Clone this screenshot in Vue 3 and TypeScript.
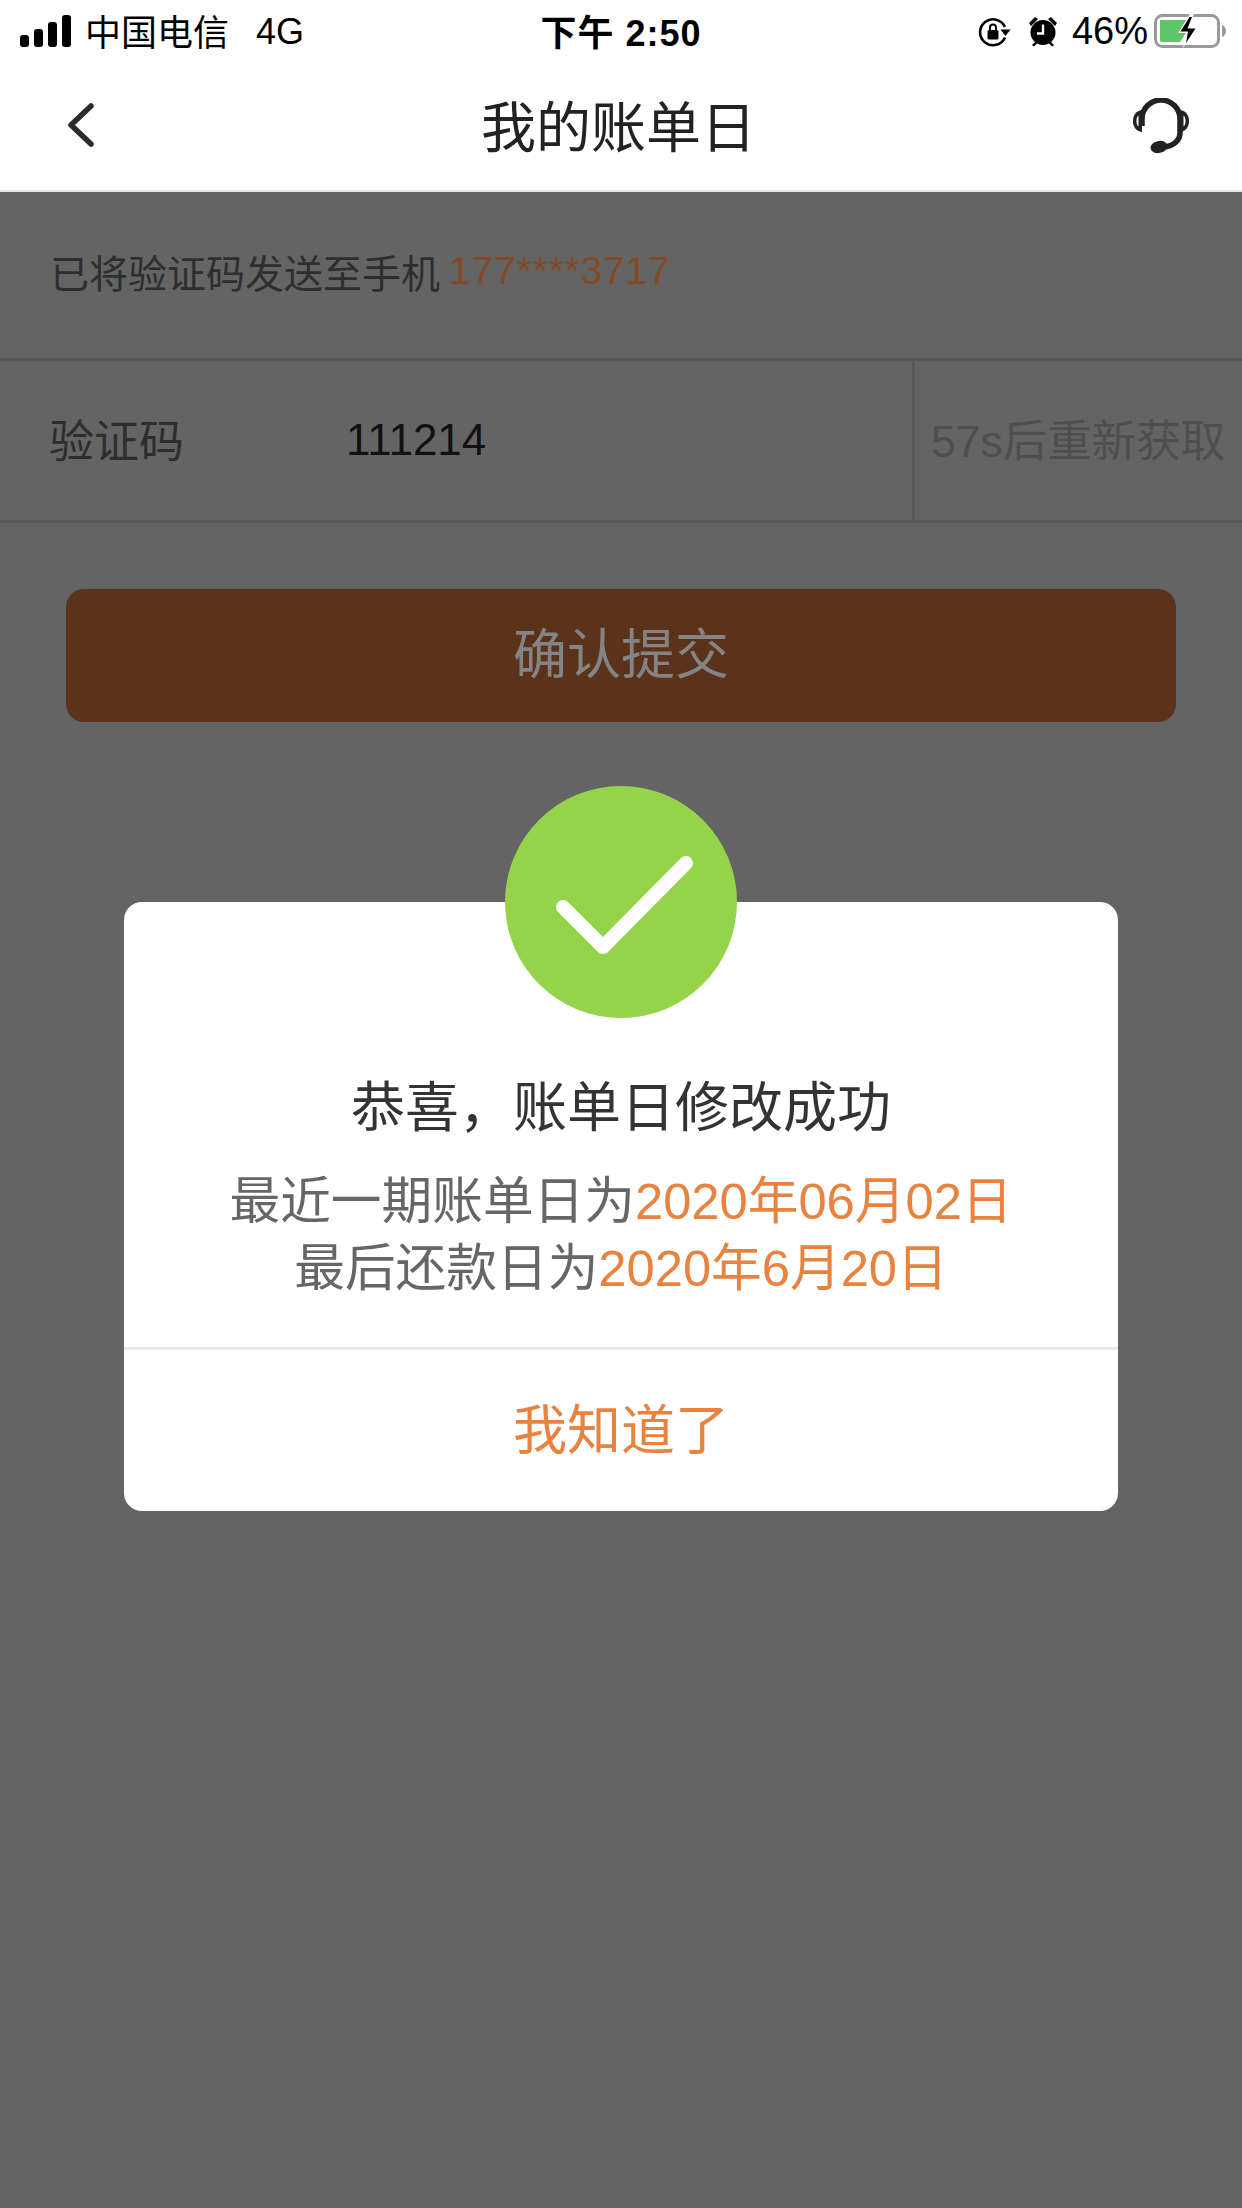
<template>
  <div class="page">
    <header class="top">
      <div class="status-bar">
        <div class="status-left">
          <svg class="signal" width="51" height="32" viewBox="0 0 51 32">
            <rect x="0" y="20" width="9" height="12" rx="3" />
            <rect x="14" y="14" width="9" height="18" rx="3" />
            <rect x="28" y="7" width="9" height="25" rx="3" />
            <rect x="42" y="0" width="9" height="32" rx="3" />
          </svg>
          <span class="carrier">中国电信</span>
          <span class="network">4G</span>
        </div>
        <span class="clock">下午 2:50</span>
        <div class="status-right">
          <svg class="lock" width="34" height="30" viewBox="0 0 34 30">
            <path d="M27 20.5A13 13 0 1 1 27 10" fill="none" stroke="#000" stroke-width="2.6" />
            <path d="M22.5 12.5h10l-5 6.5z" />
            <rect x="9.5" y="13" width="11" height="9.5" rx="1.5" />
            <path d="M12 13v-2.5a3 3 0 0 1 6 0V13" fill="none" stroke="#000" stroke-width="2" />
          </svg>
          <svg class="alarm" width="30" height="31" viewBox="0 0 30 31">
            <path d="M1 7l6-6 3 2-7 7zM29 7l-6-6-3 2 7 7z" />
            <circle cx="15" cy="16.500" r="12.500" />
            <path d="M4 29l4-4 2 1.500-4 4zM26 29l-4-4-2 1.500 4 4z" />
            <path d="M15 8.500v9h-6" fill="none" stroke="#fff" stroke-width="2.400" />
          </svg>
          <span class="percent">46%</span>
          <svg class="battery" width="72" height="34" viewBox="0 0 72 34">
            <rect x="1.500" y="1.500" width="63" height="31" rx="7" fill="#fff" stroke="#999" stroke-width="3" />
            <path d="M68 11c2.500 1 4 3 4 6s-1.500 5-4 6z" fill="#999" />
            <path d="M6 6h31L6 28z M6 6h29l-9 13h6l-6 9H9a3 3 0 0 1-3-3z" fill="#5fc667" />
            <path d="M36 0L24 19h8l-3 15 14-21h-9l6-13z" fill="#fff" />
            <path d="M35.500 3L26.500 17.500h7.500L32 29l9.500-14.500h-8L38 3z" fill="#000" />
          </svg>
        </div>
      </div>
      <nav class="nav-bar">
        <svg class="back" width="30" height="46" viewBox="0 0 30 46">
          <path d="M26 4L6 23l20 19" fill="none" stroke="#2b2b2b" stroke-width="5.500" stroke-linecap="round" stroke-linejoin="round" />
        </svg>
        <h1 class="nav-title">我的账单日</h1>
        <svg class="headset" width="56" height="56" viewBox="0 0 56 56">
          <path d="M9 28V21a19 19 0 0 1 38 0v14c0 7-6 13-16 14" fill="none" stroke="#222" stroke-width="5.500" />
          <path d="M9 12v22C3 33 0 29 0 23s3-10 9-11z" fill="#222" />
          <path d="M47 12v22c6-1 9-5 9-11s-3-10-9-11z" fill="#222" />
          <path d="M5.500 17.500v11c-1.500-1-2-3-2-5.500s.5-4.500 2-5.500zM50.500 17.500v11c1.500-1 2-3 2-5.500s-.5-4.500-2-5.500z" fill="#fff" />
          <ellipse cx="26" cy="49" rx="8.500" ry="6" transform="rotate(-12 26 49)" fill="#222" />
        </svg>
      </nav>
    </header>

    <main class="content">
      <div class="hint">已将验证码发送至手机 <span class="phone">177****3717</span></div>
      <div class="field">
        <span class="field-label">验证码</span>
        <span class="field-value">111214</span>
        <span class="resend">57s后重新获取</span>
      </div>
      <div class="submit">确认提交</div>

      <div class="overlay">
        <div class="dialog">
          <div class="badge">
            <svg width="140" height="104" viewBox="0 0 140 104">
              <path d="M8 53l40 40L131 9" fill="none" stroke="#fff" stroke-width="14" stroke-linecap="round" stroke-linejoin="round" />
            </svg>
          </div>
          <div class="dialog-body">
            <h2 class="dialog-title">恭喜，账单日修改成功</h2>
            <p class="dialog-line">最近一期账单日为<em>{{ billDate }}</em></p>
            <p class="dialog-line">最后还款日为<em>{{ dueDate }}</em></p>
          </div>
          <div class="dialog-action">我知道了</div>
        </div>
      </div>
    </main>
  </div>
</template>

<script setup lang="ts">
const billDate: string = "2020年06月02日";
const dueDate: string = "2020年6月20日";
</script>

<style>
html,
body {
  margin: 0;
  background: #646464;
}
</style>

<style scoped>
.page {
  width: 1242px;
  height: 2208px;
  display: flex;
  flex-direction: column;
  background: #646464;
  font-family: "Liberation Sans", "Noto Sans CJK SC", sans-serif;
  overflow: hidden;
}

.top {
  height: 190px;
  background: #fff;
  border-bottom: 2px solid #e6e6e6;
}

.status-bar {
  height: 62px;
  display: grid;
  grid-template-columns: 1fr auto 1fr;
  align-items: center;
  padding: 0 16px 0 20px;
  color: #000;
}

.status-left,
.status-right {
  display: flex;
  align-items: center;
}

.status-right {
  justify-content: flex-end;
}

.signal {
  margin-right: 14px;
}

.carrier {
  font-size: 36px;
  margin-bottom: 2px;
}

.network {
  font-size: 36px;
  margin-left: 27px;
  margin-top: 2px;
}

.clock {
  font-size: 36px;
  font-weight: 700;
  letter-spacing: 1px;
  margin: 0 4px 3px 0;
}

.lock {
  margin-right: 16px;
  margin-top: 1px;
}

.alarm {
  margin-right: 14px;
}

.percent {
  font-size: 38px;
  margin-right: 6px;
  margin-top: 1px;
}

.nav-bar {
  height: 128px;
  display: grid;
  grid-template-columns: 1fr auto 1fr;
  align-items: center;
  padding: 0 53px 0 48px;
}

.back {
  justify-self: start;
  margin-left: 17px;
  margin-bottom: 3px;
}

.headset {
  justify-self: end;
}

.nav-title {
  margin: 0 0 6px;
  font-size: 55px;
  font-weight: 400;
  color: #222;
}

.content {
  position: relative;
  flex: 1;
}

.hint {
  height: 169px;
  display: flex;
  align-items: center;
  gap: 9px;
  padding: 0 0 9px 50px;
  font-size: 39px;
  color: #2e2e2e;
  border-bottom: 3px solid #585858;
  box-sizing: border-box;
}

.phone {
  letter-spacing: 0.8px;
  color: #844a26;
}

.field {
  height: 162px;
  display: flex;
  align-items: center;
  padding-left: 49px;
  border-bottom: 3px solid #585858;
  box-sizing: border-box;
}

.field-label {
  width: 297px;
  font-size: 45px;
  color: #2e2e2e;
  margin-bottom: 5px;
}

.field-value {
  flex: 1;
  font-size: 44px;
  color: #111;
  margin-bottom: 2px;
}

.resend {
  width: 330px;
  height: 100%;
  display: flex;
  align-items: center;
  padding: 0 0 6px 16px;
  box-sizing: border-box;
  border-left: 3px solid #585858;
  font-size: 44.500px;
  color: #4e4e4e;
  white-space: nowrap;
}

.submit {
  height: 133px;
  margin: 66px 66px 0;
  padding-bottom: 10px;
  box-sizing: border-box;
  display: flex;
  align-items: center;
  justify-content: center;
  border-radius: 18px;
  background: #5b331b;
  font-size: 54px;
  color: #848484;
}

.overlay {
  position: absolute;
  inset: 0;
  padding: 710px 124px 0;
}

.dialog {
  position: relative;
  height: 609px;
  display: flex;
  flex-direction: column;
  border-radius: 18px;
  background: #fff;
}

.badge {
  position: absolute;
  top: -116px;
  left: 381px;
  width: 232px;
  height: 232px;
  padding: 8px 0 0 8px;
  box-sizing: border-box;
  display: flex;
  align-items: center;
  justify-content: center;
  border-radius: 50%;
  background: #94d34a;
}

.dialog-body {
  height: 448px;
  padding-top: 169px;
  box-sizing: border-box;
  text-align: center;
  border-bottom: 3px solid #e8e8e8;
}

.dialog-title {
  margin: 0 0 23px;
  font-size: 54px;
  line-height: 74px;
  font-weight: 400;
  color: #333;
}

.dialog-line {
  margin: 0;
  font-size: 50.700px;
  line-height: 67px;
  color: #666;
}

.dialog-line em {
  font-style: normal;
  color: #e8823f;
}

.dialog-action {
  flex: 1;
  padding-bottom: 8px;
  display: flex;
  align-items: center;
  justify-content: center;
  font-size: 54px;
  color: #e8823f;
}
</style>
